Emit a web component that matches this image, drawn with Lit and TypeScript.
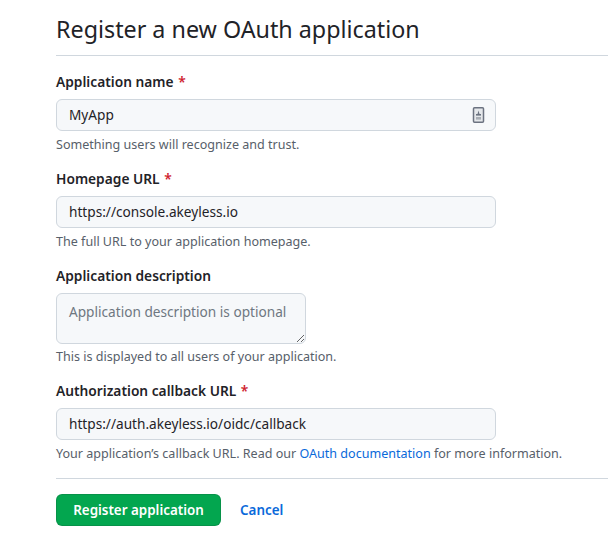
import { LitElement, html, css } from 'lit';
import { customElement } from 'lit/decorators.js';

@customElement('app-root')
export class AppRoot extends LitElement {
  static styles = css`
    :host {
      display: block;
      height: 556px;
      overflow: hidden;
      background: #fff;
      color: #1f2328;
      font-family: 'Noto Sans', sans-serif;
      font-size: 13.65px;
    }
    .page {
      padding: 13px 0 0 56px;
    }
    h1 {
      margin: 0;
      font-size: 23.3px;
      font-weight: 400;
      line-height: 32px;
      padding-bottom: 10px;
      border-bottom: 1px solid #d0d7de;
    }
    form {
      margin: 0;
    }
    .field {
      display: block;
      margin-top: 15px;
    }
    .field.first {
      margin-top: 16px;
    }
    .label {
      display: block;
      font-weight: 600;
      line-height: 20px;
      font-size: 13.75px;
      margin-bottom: 7px;
    }
    .req {
      color: #cf222e;
      margin-left: 1px;
    }
    .control {
      position: relative;
      width: 440px;
    }
    input,
    textarea {
      display: block;
      box-sizing: border-box;
      width: 100%;
      height: 32px;
      margin: 0;
      padding: 4px 12px 6px;
      border: 1px solid #d0d7de;
      border-radius: 6px;
      background: #f6f8fa;
      color: #1f2328;
      font: inherit;
      line-height: 20px;
      outline: none;
    }
    textarea {
      width: 250px;
      height: 51px;
      padding: 8px 12px;
      resize: vertical;
    }
    textarea::placeholder {
      color: #6e7781;
      opacity: 1;
    }
    .key {
      position: absolute;
      right: 10px;
      top: 8px;
    }
    .note {
      margin: 5px 0 0;
      font-size: 12.55px;
      line-height: 18px;
      color: #57606a;
    }
    textarea + .note {
      margin-top: 4px;
    }
    .note a,
    .cancel {
      color: #0969da;
      text-decoration: none;
    }
    .actions {
      display: flex;
      align-items: center;
      gap: 19px;
      margin-top: 15px;
      padding-top: 15px;
      border-top: 1px solid #d0d7de;
    }
    button {
      width: 165px;
      height: 32px;
      border: 1px solid rgba(31, 35, 40, 0.15);
      border-radius: 6px;
      background: #03a64f;
      color: #fff;
      font: 600 13.4px 'Noto Sans', sans-serif;
      padding: 0;
    }
    .cancel {
      font-weight: 600;
      font-size: 13.4px;
    }
  `;

  render() {
    return html`
      <div class="page">
        <h1>Register a new OAuth application</h1>
        <form>
          <label class="field first">
            <span class="label">Application name <span class="req">*</span></span>
            <div class="control">
              <input type="text" value="MyApp" />
              <svg class="key" width="14" height="16" viewBox="0 0 14 16">
                <rect x="1.5" y="0.75" width="10" height="14.5" rx="1" fill="#e4e7ea" stroke="#6b7280" stroke-width="1.5" />
                <path d="M5.5 7 L6.5 3.5 L7.5 7 Z" fill="#6b7280" />
                <rect x="4" y="7" width="5" height="1.6" fill="#6b7280" />
                <rect x="4" y="10" width="5" height="2.6" fill="#a9aeb5" />
              </svg>
            </div>
            <p class="note">Something users will recognize and trust.</p>
          </label>
          <label class="field">
            <span class="label">Homepage URL <span class="req">*</span></span>
            <div class="control"><input type="text" value="https://console.akeyless.io" /></div>
            <p class="note">The full URL to your application homepage.</p>
          </label>
          <label class="field">
            <span class="label">Application description</span>
            <textarea placeholder="Application description is optional"></textarea>
            <p class="note">This is displayed to all users of your application.</p>
          </label>
          <label class="field">
            <span class="label">Authorization callback URL <span class="req">*</span></span>
            <div class="control"><input type="text" value="https://auth.akeyless.io/oidc/callback" /></div>
            <p class="note">Your application’s callback URL. Read our <a href="#">OAuth documentation</a> for more information.</p>
          </label>
          <div class="actions">
            <button type="button">Register application</button>
            <a class="cancel" href="#">Cancel</a>
          </div>
        </form>
      </div>
    `;
  }
}
